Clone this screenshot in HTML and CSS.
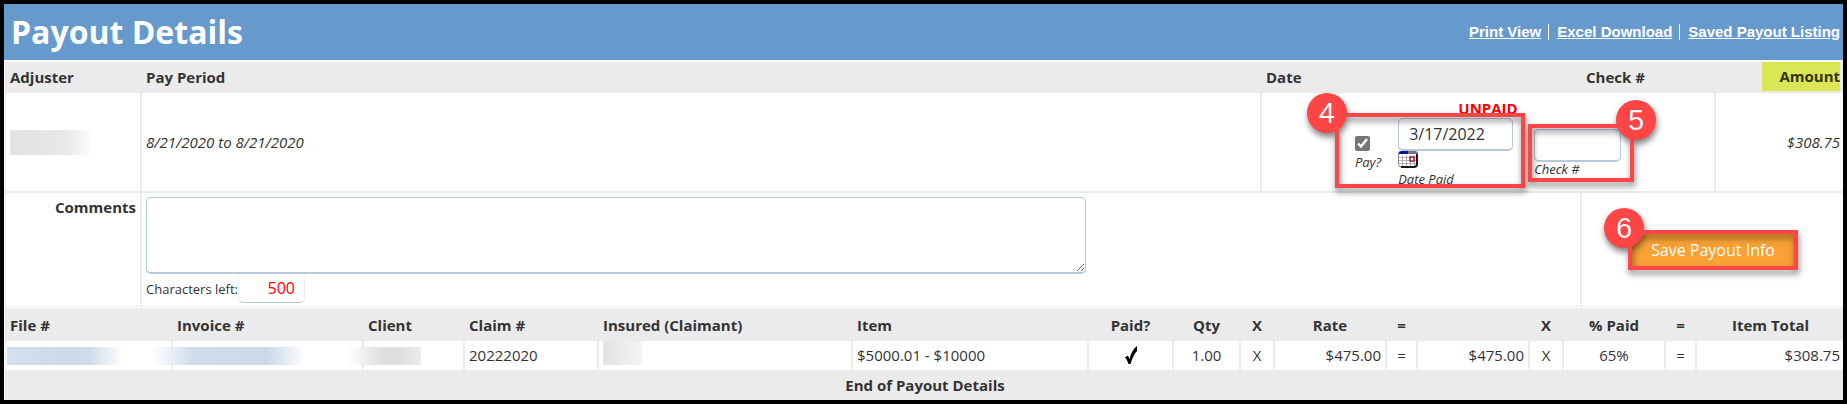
FILE: index.html
```html
<!DOCTYPE html>
<html lang="en">
<head>
  <meta charset="UTF-8">
  <title>Payout Details</title>
  <link rel="stylesheet" href="styles.css">
</head>
<body>
<div class="page-header">
  <h1 class="page-title">Payout Details</h1>
  <div class="page-links">
    <a href="#">Print View</a>
    <a href="#">Excel Download</a>
    <a href="#">Saved Payout Listing</a>
  </div>
</div>

<form class="payout-form">
  <table class="summary">
    <colgroup>
      <col class="col-adjuster">
      <col>
      <col class="col-date">
      <col class="col-check">
      <col class="col-amount">
    </colgroup>
    <tr class="head">
      <th>Adjuster</th>
      <th>Pay Period</th>
      <th>Date</th>
      <th>Check #</th>
      <th class="amount-head"><span class="highlight">Amount</span></th>
    </tr>
    <tr class="payout-row">
      <td><div class="redacted-adjuster"></div></td>
      <td><i>8/21/2020 to 8/21/2020</i></td>
      <td colspan="2">
        <div class="unpaid">UNPAID</div>
        <div class="pay-fields">
          <div class="pay-group">
            <div class="field">
              <input type="checkbox" class="pay-check" id="pay" checked>
              <label for="pay">Pay?</label>
            </div>
            <div class="field">
              <input type="text" class="text-input date-input" id="date-paid" value="3/17/2022">
              <button type="button" class="calendar" aria-label="Calendar">
                <svg width="20" height="17" viewBox="0 0 20 17">
                  <rect x="1" y="1" width="18" height="15" rx="3" fill="#fff"/>
                  <path d="M4.500 4v12M8.500 4v12M12.500 4v12M16.500 4v12M1 6.500h17M1 9.500h17M1 12.500h17" stroke="#b5b0b5" fill="none"/>
                  <path d="M3 0h14a3 3 0 0 1 3 3H0a3 3 0 0 1 3-3z" fill="#77737b"/>
                  <path d="M3 0h7v3H1V2z" fill="#0d0da8"/>
                  <path d="M.5 3v10a3 3 0 0 0 3 3" stroke="#8d898d" fill="none"/>
                  <path d="M3 16h13a3 3 0 0 0 3-3V3" stroke="#1d181d" stroke-width="2" fill="none"/>
                  <rect x="12" y="6" width="4" height="4" fill="#fff" stroke="#a0163c" stroke-width="1.5"/>
                </svg>
              </button>
              <label for="date-paid">Date Paid</label>
            </div>
            <div class="callout callout-date"><span class="badge badge-left">4</span></div>
          </div>
          <div class="check-group">
            <div class="field">
              <input type="text" class="text-input check-input" id="check-no">
              <label for="check-no">Check #</label>
            </div>
            <div class="callout callout-check"><span class="badge badge-right">5</span></div>
          </div>
        </div>
      </td>
      <td class="right"><i>$308.75</i></td>
    </tr>
    <tr class="comments-row">
      <th class="comments-label"><label for="comments">Comments</label></th>
      <td colspan="2" class="comments-cell">
        <textarea class="comments" id="comments"></textarea>
        <div class="chars">
          <label for="chars-left">Characters left:</label>
          <input type="text" class="chars-input" id="chars-left" value="500" readonly>
        </div>
      </td>
      <td colspan="2">
        <div class="save-group">
          <button type="submit" class="save">Save Payout Info</button>
          <div class="callout callout-save"><span class="badge badge-save">6</span></div>
        </div>
      </td>
    </tr>
  </table>
</form>

<table class="items">
  <colgroup>
    <col class="col-file">
    <col class="col-invoice">
    <col class="col-client">
    <col class="col-claim">
    <col class="col-insured">
    <col>
    <col class="col-paid">
    <col class="col-qty">
    <col class="col-times">
    <col class="col-rate">
    <col class="col-equals">
    <col class="col-rate">
    <col class="col-times">
    <col class="col-percent">
    <col class="col-equals">
    <col class="col-total">
  </colgroup>
  <tr class="head">
    <th>File #</th>
    <th>Invoice #</th>
    <th>Client</th>
    <th>Claim #</th>
    <th>Insured (Claimant)</th>
    <th>Item</th>
    <th class="center">Paid?</th>
    <th class="center">Qty</th>
    <th class="center">X</th>
    <th class="center">Rate</th>
    <th class="center">=</th>
    <th></th>
    <th class="center">X</th>
    <th class="center">% Paid</th>
    <th class="center">=</th>
    <th class="center">Item Total</th>
  </tr>
  <tr class="item-row">
    <td class="redacted-cell"><div class="redacted-items"></div></td>
    <td></td>
    <td></td>
    <td>20222020</td>
    <td class="insured-cell"><div class="redacted-insured"></div></td>
    <td>$5000.01 - $10000</td>
    <td class="center">
      <svg class="tick" width="14" height="20" viewBox="0 0 14 20">
        <path d="M1 12.500l3-2 1.500 3.500C7 8 9.500 3.500 13 1v5C10 9 8 14 6.500 19H4.500C3.500 16 2.500 14 1 12.500z" fill="#000"/>
      </svg>
    </td>
    <td class="center">1.00</td>
    <td class="center">X</td>
    <td class="right">$475.00</td>
    <td class="center">=</td>
    <td class="right">$475.00</td>
    <td class="center">X</td>
    <td class="center">65%</td>
    <td class="center">=</td>
    <td class="right">$308.75</td>
  </tr>
  <tr class="foot">
    <th colspan="16" class="center">End of Payout Details</th>
  </tr>
</table>
</body>
</html>
```
FILE: styles.css
```css
* {
  box-sizing: border-box;
}

html {
  background-color: #000;
}

body {
  margin: 4px;
  background-color: #fff;
  color: #333;
  font-family: "Open Sans", sans-serif;
  font-size: 15px;
  line-height: 20px;
}

.page-header {
  display: flex;
  align-items: center;
  justify-content: space-between;
  height: 56px;
  padding: 0 3px 0 7px;
  background-color: #6699cc;
  color: #fff;
}

.page-title {
  margin: 0;
  font-size: 32px;
  line-height: 48px;
}

.page-links {
  display: flex;
  font-family: "Liberation Sans", Arial, sans-serif;
  font-size: 15px;
  font-weight: bold;
  line-height: 16px;
}

.page-links a {
  color: #fff;
}

.page-links a + a {
  margin-left: 7px;
  padding-left: 8px;
  border-left: 1px solid #fff;
}

table {
  width: 100%;
  table-layout: fixed;
  border-spacing: 0;
}

th,
td {
  padding: 0 4px;
  text-align: left;
  border-right: 2px solid #ebebeb;
}

th:last-child,
td:last-child {
  padding-right: 3px;
  border-right: none;
}

.head th,
.foot th {
  background-color: #ebebeb;
}

.center {
  text-align: center;
}

.right {
  text-align: right;
}

/* Summary */
.payout-form {
  padding: 2px 0 0 1px;
}

.summary {
  border-left: 1px solid #ebebeb;
}

.col-adjuster { width: 136px; }
.col-date { width: 320px; }
.col-check { width: 134px; }
.col-amount { width: 127px; }

.summary .head th {
  height: 31px;
  padding-bottom: 2px;
}

.summary .amount-head {
  text-align: right;
}

.highlight {
  display: inline-block;
  width: 78px;
  line-height: 29px;
  vertical-align: top;
  background-color: #dbe655;
  color: #31330f;
}

.payout-row td {
  height: 100px;
  border-bottom: 2px solid #ebebeb;
}

.unpaid {
  color: #f00;
  font-weight: bold;
  text-align: center;
}

.pay-fields {
  display: flex;
  align-items: center;
  justify-content: center;
  gap: 21px;
}

.pay-group,
.check-group,
.save-group {
  position: relative;
  display: flex;
  align-items: center;
}

.pay-group {
  gap: 17px;
}

.field {
  display: flex;
  flex-direction: column;
  align-items: flex-start;
}

.field label {
  font-size: 13px;
  font-style: italic;
  line-height: 14px;
}

.pay-check {
  width: 15px;
  height: 15px;
  margin: 0 0 4px;
  accent-color: #767676;
}

.text-input {
  height: 33px;
  padding: 0 10px;
  border: 1px solid #b8c8dc;
  border-bottom-width: 2px;
  border-radius: 5px;
  background-color: #fff;
  color: #333;
  font-family: inherit;
  font-size: 16px;
}

.date-input {
  width: 115px;
}

.check-input {
  width: 87px;
}

.calendar {
  height: 21px;
  padding: 0;
  border: none;
  background: none;
}

.calendar svg {
  display: block;
  margin-bottom: 4px;
}

.comments-row th,
.comments-row td {
  height: 114px;
  border-bottom: 1px solid #ebebeb;
}

.comments-row .comments-label {
  padding-top: 4px;
  text-align: right;
  vertical-align: top;
}

.comments-row .comments-cell {
  padding-top: 4px;
  vertical-align: top;
}

.comments {
  display: block;
  width: 940px;
  max-width: 100%;
  height: 77px;
  border: 1px solid #b8c8dc;
  border-bottom-width: 2px;
  border-radius: 5px;
  font-family: inherit;
  font-size: 15px;
}

.chars {
  display: flex;
  align-items: center;
  font-size: 13px;
}

.chars-input {
  width: 67px;
  height: 29px;
  padding: 0 9px;
  border: 1px solid #e6ecf4;
  border-top: none;
  border-bottom-color: #b8c8dc;
  border-radius: 5px;
  color: #f00;
  font-family: inherit;
  font-size: 16px;
  text-align: right;
}

.save-group {
  width: 162px;
  margin: 0 auto;
}

.save {
  width: 100%;
  height: 32px;
  padding: 0;
  border: none;
  background-color: #f9a135;
  color: #fff;
  font-family: inherit;
  font-size: 16px;
}

/* Callouts */
.callout {
  position: absolute;
  border: 4px solid #ff4545;
  filter: drop-shadow(1px 4px 3px rgba(0, 0, 0, 0.5));
  pointer-events: none;
}

.callout-date {
  top: -5px;
  right: -12px;
  bottom: -2px;
  left: -20px;
}

.callout-check {
  top: -5px;
  right: -13px;
  bottom: -6px;
  left: -6px;
}

.callout-save {
  top: -4px;
  right: -4px;
  bottom: -4px;
  left: -4px;
}

.badge {
  position: absolute;
  width: 40px;
  height: 40px;
  border-radius: 50%;
  background-color: #ff4545;
  color: #fff;
  font-family: "Liberation Sans", Arial, sans-serif;
  font-size: 29px;
  line-height: 41px;
  text-align: center;
}

.badge-left {
  top: -24px;
  left: -32px;
}

.badge-right {
  top: -28px;
  right: -26px;
}

.badge-save {
  top: -26px;
  left: -28px;
}

/* Items */
.items {
  margin-top: 1px;
  padding-left: 1px;
}

.col-file { width: 168px; }
.col-invoice { width: 191px; }
.col-client { width: 101px; }
.col-claim { width: 134px; }
.col-insured { width: 254px; }
.col-paid { width: 85px; }
.col-qty { width: 67px; }
.col-times { width: 34px; }
.col-equals { width: 31px; }
.col-rate { width: 112px; }
.col-percent { width: 102px; }
.col-total { width: 146px; }

.items th {
  height: 33px;
}

.items th:first-child {
  padding-left: 5px;
}

.item-row td {
  height: 29px;
  padding-bottom: 2px;
}

.item-row td:first-child {
  border-left: 1px solid #ebebeb;
}

.items .foot th {
  height: 30px;
}

.tick {
  display: block;
  margin: 0 auto;
}

/* Blanked out values */
.redacted-adjuster {
  width: 80px;
  height: 25px;
  background: linear-gradient(to right, #e2e2e2, #e8e8e8 70%, #fafafa);
}

.redacted-cell {
  position: relative;
}

.redacted-items {
  position: absolute;
  top: 6px;
  left: 1px;
  width: 414px;
  height: 18px;
  background: linear-gradient(to right, #d5e0ed, #cbd9e9 15%, #cfdcea 20%, #fff 28%, #fff 35%, #cfdcea 45%, #cbd9e9 63%, #fff 72%, #fff 82%, #dfdfdd 91%, #dfdfdd 95%, #ebebeb);
}

.insured-cell {
  vertical-align: top;
}

.redacted-insured {
  width: 39px;
  height: 24px;
  background: linear-gradient(to right, #e2e2e0, #f3f5f5);
}
```
